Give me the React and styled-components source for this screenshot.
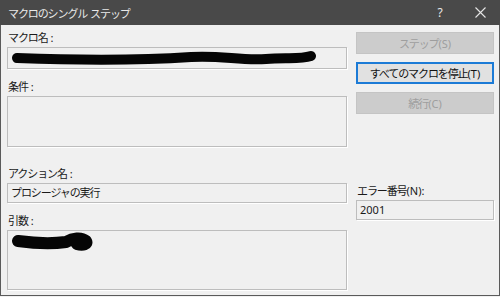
import React from "react";
import styled, { createGlobalStyle } from "styled-components";

const GlobalStyle = createGlobalStyle`
    html, body {
        margin: 0;
        padding: 0;
        background: #f0f0f0;
    }
    body {
        font-family: "Noto Sans", "Noto Sans CJK JP", sans-serif;
        font-size: 11px;
        color: #1a1a1a;
    }
`;

const Scribble = ({ width, height, stroke, d }) => (
    <svg width={width} height={height} viewBox={`0 0 ${width} ${height}`}>
        <path d={d} fill="none" stroke="#050505" strokeWidth={stroke} strokeLinecap="round" strokeLinejoin="round" />
    </svg>
);

const App = () => {
    return (
        <>
            <GlobalStyle />
            <Window>
                <TitleBar>
                    <span className="title">マクロのシングル<Latin> </Latin>ステップ</span>
                    <span className="help">?</span>
                    <span className="close">
                        <svg width="11" height="11" viewBox="0 0 11 11">
                            <path d="M0.5 0.5 L10.5 10.5 M10.5 0.5 L0.5 10.5" stroke="#e6e6e6" strokeWidth="1.1" />
                        </svg>
                    </span>
                </TitleBar>
                <Body>
                    <LeftColumn>
                        <Label>マクロ名<Latin> :</Latin></Label>
                        <Field height={22}>
                            <Scribble
                                width={306}
                                height={18}
                                stroke={10}
                                d="M6 9 C60 11 120 12 180 8 C210 6 230 12 255 10 C275 8 288 11 300 7"
                            />
                        </Field>
                        <Label space={11}>条件<Latin> :</Latin></Label>
                        <Field height={51} />
                        <Label space={20}>アクション名<Latin> :</Latin></Label>
                        <Field height={20}>プロシージャの実行</Field>
                        <Label space={11}>引数<Latin> :</Latin></Label>
                        <Field height={60}>
                            <Scribble
                                width={84}
                                height={20}
                                stroke={12}
                                d="M7 9 C22 11 40 12 55 10 C62 6 70 5 75 9 C77 12 72 14 66 12"
                            />
                        </Field>
                    </LeftColumn>
                    <RightColumn>
                        <Button disabled>ステップ<Latin>(S)</Latin></Button>
                        <Button primary>すべてのマクロを停止<Latin>(T)</Latin></Button>
                        <Button disabled>続行<Latin>(C)</Latin></Button>
                        <Label space={62}>エラー番号<Latin>(N):</Latin></Label>
                        <Field height={20}><Latin>2001</Latin></Field>
                    </RightColumn>
                </Body>
            </Window>
        </>
    );
};

export default App;

const Window = styled.div`
    width: 500px;
    height: 296px;
    box-sizing: border-box;
    border: 1px solid #5a5a5a;
    border-top: none;
    display: flex;
    flex-direction: column;
    background: #f0f0f0;
    letter-spacing: -1.1px;
`;

const Latin = styled.span`
    letter-spacing: 0;
    white-space: pre;
`;

const TitleBar = styled.div`
    height: 25px;
    margin: 0 -1px;
    background: #494949;
    color: #e8e8e8;
    display: flex;
    align-items: center;
    padding-left: 8px;
    font-size: 11px;
    .title {
        flex: 1;
    }
    .help {
        width: 14px;
        margin-right: 13px;
        font-size: 12px;
        letter-spacing: 0;
        text-align: center;
    }
    .close {
        width: 40px;
        display: flex;
        justify-content: center;
    }
`;

const Body = styled.div`
    flex: 1;
    display: flex;
    gap: 9px;
    padding: 6px 5px 0 6px;
`;

const LeftColumn = styled.div`
    width: 340px;
    display: flex;
    flex-direction: column;
`;

const RightColumn = styled.div`
    flex: 1;
    display: flex;
    flex-direction: column;
    padding-top: 1px;
`;

const Label = styled.div`
    height: 16px;
    line-height: 14px;
    margin-top: ${({ space }) => space || 0}px;
    padding-left: 1px;
`;

const Field = styled.div`
    height: ${({ height }) => height}px;
    box-sizing: border-box;
    border: 1px solid #bdbdbd;
    box-shadow: 1px 1px 0 #ffffff;
    background: #f0f0f0;
    padding: 1px 3px;
    line-height: 16px;
    svg {
        display: block;
    }
`;

const Button = styled.div`
    height: 22px;
    box-sizing: border-box;
    margin-bottom: 8px;
    display: flex;
    align-items: center;
    justify-content: center;
    background: ${({ primary }) => (primary ? "#e1e1e1" : "#cccccc")};
    border: ${({ primary }) => (primary ? "2px solid #1c7bd6" : "1px solid #c4c4c4")};
    color: ${({ disabled }) => (disabled ? "#9e9e9e" : "#111111")};
`;
